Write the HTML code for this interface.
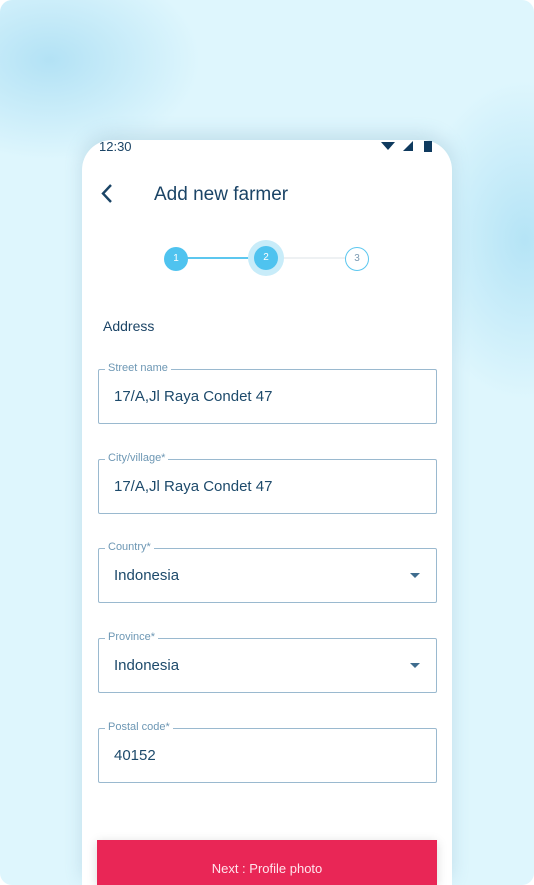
<!DOCTYPE html>
<html style="width:534px;height:885px;overflow:hidden"><head><style>
*{margin:0;padding:0;box-sizing:border-box}
body{width:534px;height:885px;background:#fff;font-family:"Liberation Sans",sans-serif;position:relative;overflow:hidden}
.bg{position:absolute;left:0;top:0;width:534px;height:885px;border-radius:12px;
background:radial-gradient(ellipse 150px 100px at 50px 60px,#b3e2f5,rgba(220,245,253,0)),radial-gradient(ellipse 110px 160px at 525px 240px,#b5e4f6,rgba(220,245,253,0)),#def6fd}
.card{position:absolute;left:82px;top:140px;width:370px;height:745px;background:#fff;border-radius:30px 30px 0 0;box-shadow:0 -6px 18px rgba(80,130,160,.2)}
.t{position:absolute;color:#1b4466}
.f{position:absolute;left:98px;width:339px;height:55px;border:1.5px solid #9ab9cf;border-radius:2px}
.f .l{position:absolute;left:6px;top:-8px;background:#fff;padding:0 3px;font-size:11px;color:#6d97b4}
.f .v{position:absolute;left:15px;top:18px;font-size:15px;color:#1d4a6b}
.f .a{position:absolute;right:16px;top:24px;width:0;height:0;border-left:5px solid transparent;border-right:5px solid transparent;border-top:5px solid #3f6c8e}
.btn{position:absolute;left:97px;top:840px;width:340px;height:45px;background:#e92656;font-size:13px;text-align:center;padding-top:21px;color:#ffe4ec;box-shadow:0 2px 10px rgba(0,0,0,.15)}
.c{position:absolute;border-radius:50%;font-size:10px;text-align:center;color:#fff}
</style></head><body>
<div class="bg"></div>
<div class="card"></div>
<div class="t" style="left:99px;top:139px;font-size:13px;">12:30</div>
<svg style="position:absolute;left:381px;top:140px" width="55" height="12"><path d="M0 2 L14 2 L7 10Z" fill="#0f3a5e"/><path d="M22 11 L32 1 L32 11Z" fill="#0f3a5e"/><rect x="43" y="1" width="8" height="11" fill="#0f3a5e"/></svg>
<svg style="position:absolute;left:100px;top:183px" width="14" height="22"><path d="M11 2 L3 10.5 L11 19" stroke="#1b4466" stroke-width="2.4" fill="none"/></svg>
<div class="t" style="left:154px;top:184px;font-size:19px;">Add new farmer</div>
<div style="position:absolute;left:176px;top:257px;width:90px;height:2px;background:#5cc7ef"></div>
<div style="position:absolute;left:266px;top:257px;width:90px;height:2px;background:#eef1f3"></div>
<div class="c" style="left:164px;top:247px;width:24px;height:24px;background:#4fc3ef;line-height:24px">1</div>
<div class="c" style="left:248px;top:240px;width:36px;height:36px;background:#c8ecf9"></div>
<div class="c" style="left:254px;top:246px;width:24px;height:24px;background:#4fc3ef;line-height:24px">2</div>
<div class="c" style="left:345px;top:247px;width:24px;height:24px;background:#fff;border:1.5px solid #5cc7ef;color:#7a9ab2;line-height:21px">3</div>
<div class="t" style="left:103px;top:318px;font-size:14px;">Address</div>
<div class="f" style="top:369px"><span class="l">Street name</span><span class="v">17/A,Jl Raya Condet 47</span></div>
<div class="f" style="top:459px"><span class="l">City/village*</span><span class="v">17/A,Jl Raya Condet 47</span></div>
<div class="f" style="top:548px"><span class="l">Country*</span><span class="v">Indonesia</span><span class="a"></span></div>
<div class="f" style="top:638px"><span class="l">Province*</span><span class="v">Indonesia</span><span class="a"></span></div>
<div class="f" style="top:728px"><span class="l">Postal code*</span><span class="v">40152</span></div>
<div class="btn">Next : Profile photo</div>
</body></html>
